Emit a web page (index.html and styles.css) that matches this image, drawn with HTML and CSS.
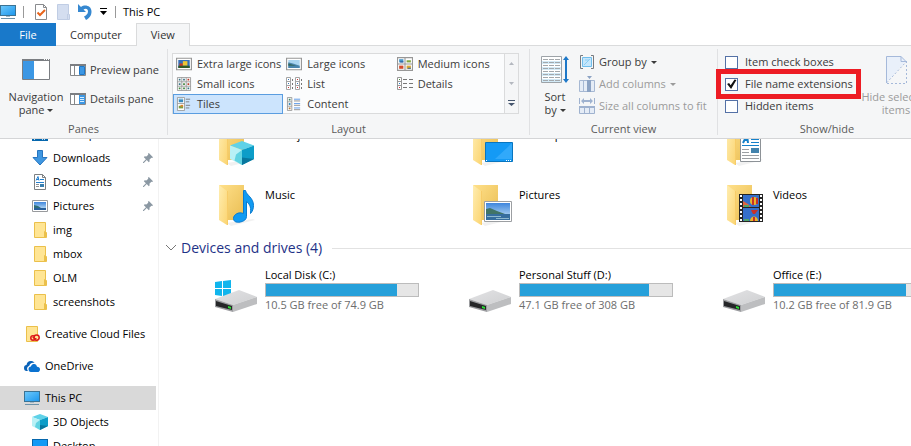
FILE: index.html
```html
<!DOCTYPE html>
<html lang="en">
<head>
<meta charset="utf-8">
<title>This PC</title>
<link rel="stylesheet" href="styles.css">
</head>
<body>
<svg class="sprite" aria-hidden="true">
  <defs>
    <linearGradient id="screen" x1="0" y1="0" x2="1" y2="1"><stop offset="0" stop-color="#6cc8fb"/><stop offset="1" stop-color="#1e98ee"/></linearGradient>
    <linearGradient id="back" x1="0" y1="0" x2="1" y2="1"><stop offset="0" stop-color="#ffe08a"/><stop offset="1" stop-color="#e9bd52"/></linearGradient>
    <linearGradient id="flap" x1="0" y1="0" x2="1" y2="1"><stop offset="0" stop-color="#ffedb0"/><stop offset="1" stop-color="#fbd573"/></linearGradient>
    <linearGradient id="metal" x1="0" y1="0" x2="1" y2="1"><stop offset="0" stop-color="#e2e2e4"/><stop offset="1" stop-color="#cfd0d2"/></linearGradient>
    <linearGradient id="sky" x1="0" y1="0" x2="0" y2="1"><stop offset="0" stop-color="#3f86dd"/><stop offset="1" stop-color="#cfeaf8"/></linearGradient>
  </defs>
  <symbol id="pc" viewBox="0 0 16 16"><path fill="#3b7394" d="M0 1h16v11H0z"/><path fill="url(#screen)" d="M1 2h14v9H1z"/><path fill="#a3b9c6" d="M6 12h4v1H6z"/><path fill="#6c92a9" d="M1 14h14v1H1z"/></symbol>
  <symbol id="desktop" viewBox="0 0 16 16"><path fill="#0667ad" d="M0 1h16v14H0z"/><path fill="#149af5" d="M1 2h14v10H1z"/><path fill="#bfe2fb" d="M2 13h1v1H2zM10 13h1v1h-1zM12 13h1v1h-1z"/></symbol>
  <symbol id="download" viewBox="0 0 16 16"><path fill="#3f97e1" stroke="#2775c0" d="M5.500.5h5v7h4.500L8 15 1 7.500h4.500z"/></symbol>
  <symbol id="document" viewBox="0 0 16 16"><path fill="#fff" stroke="#7c8082" d="M2.500.5h8l3 3v12h-11z"/><path fill="none" stroke="#7c8082" d="M10.500.5v3h3"/><path fill="none" stroke="#2380cf" d="M4 6.500l2-4 1 4M4 5.500h3M8 5.500h4M4 8.500h8"/><path stroke="#8d9194" d="M4 10.500h3M4 12.500h3"/><path fill="#397fae" d="M8 10h4v3H8z"/></symbol>
  <symbol id="picture" viewBox="0 0 16 16"><path fill="#fff" stroke="#989a9d" d="M.5 2.500h15v11H.5z"/><path fill="url(#sky)" d="M2 4h12v8H2z"/><path fill="#2f6f78" d="M2 7l4 1 3 2h-7z"/><path fill="#285f9b" d="M2 10h12v2H2z"/></symbol>
  <symbol id="folder" viewBox="0 0 16 16"><path fill="#ffe594" stroke="#ebc04b" d="M2.500.5h11v9l1 1v5h-12z"/><path fill="#ffdc73" stroke="#ebc04b" d="M12.500 9.500h1v6h-1z"/></symbol>
  <symbol id="ccfolder" viewBox="0 0 16 16"><path fill="#ffe594" stroke="#ebc04b" d="M2.500.5h11v15h-11z"/><circle cx="9" cy="12" r="2.200" fill="#ffe594" stroke="#dc1818" stroke-width="1.500"/><circle cx="12.600" cy="11.600" r="2.600" fill="#ffe594" stroke="#dc1818" stroke-width="1.500"/><path fill="none" stroke="#dc1818" stroke-width="1.300" d="M8.500 11.500c1.500-1 2 2 4 1"/></symbol>
  <symbol id="cloud" viewBox="0 0 16 16"><path fill="#0a62b8" d="M0 10c0-2 1-3 2.500-3C3 4 5 2.500 7.500 3c1.500.2 2.500 1 3 2-3-.6-5 1-5.300 3C3 8.500 2.500 11 4 13H2.500C1 13 0 12 0 10z"/><path fill="#0a72d0" d="M4.500 11c0-1.500 1-2.500 2.500-2.500C7.300 6.500 8.800 5.600 10.200 6c1.500 0 2.500 1.200 2.800 2.800 1.800 0 3 1 3 2.600 0 1.500-1 2.600-2.500 2.600H7c-1.500 0-2.500-1-2.500-3z"/></symbol>
  <symbol id="cube" viewBox="0 0 16 16"><path fill="#5fd2e8" d="M8 0l8 3-8 3-8-3z"/><path fill="#b8f1f6" d="M0 3l8 3v10l-8-4z"/><path fill="#61d3e2" d="M4 9l4-3v10l-5-3z"/><path fill="#0c9dc8" d="M16 3L8 6v10l8-4z"/><path fill="#08779e" d="M8 11l8 1-8 4z"/></symbol>
  <symbol id="pin" viewBox="0 0 12 12"><path fill="#8b98a3" d="M7 0l5 5-1 1-1-.3L7.700 8l.3 2-1 1-2.500-2.500L1 12H0v-1l3.500-3.500L1 5l1-1 2 .3L6.300 2 6 1z"/></symbol>

  <symbol id="bigfolder" viewBox="0 0 48 48"><path fill="#e8e8e8" opacity=".6" d="M14 42l26-4 2 1-24 6z"/><path fill="url(#back)" d="M6 4h25v35H14z"/><path fill="url(#flap)" d="M6 4l8 6v34L6 39z"/><path fill="#f7cc68" d="M14 10h1v34h-1z"/></symbol>
  <symbol id="bigdrive" viewBox="0 0 48 48"><path fill="url(#metal)" d="M2 32l24-9 18 7-24 8z"/><path fill="#bdbec0" d="M20 38l24-8v7l-24 8z"/><path fill="#9c9da0" d="M2 32l18 6v7L2 40z"/><path fill="#252628" d="M3 34l16 5v4L3 39z"/><path fill="#28df32" d="M15 39l3 1v2l-3-1z"/></symbol>

  <symbol id="photo" viewBox="0 0 14 11"><path fill="#fff" stroke="#979797" d="M.5.5h13v10H.5z"/><path fill="#346fb8" d="M2 2h10v7H2z"/><path fill="#cb3a24" d="M3 5h3v3H3z"/><path fill="#efc634" d="M6 3h4v4H6z"/><path fill="#315b28" d="M2 7h10v2H2z"/></symbol>
  <symbol id="landscape" viewBox="0 0 14 11"><path fill="#fff" stroke="#979797" d="M.5.5h13v10H.5z"/><path fill="#a9d4f0" d="M2 2h10v7H2z"/><path fill="#4985ad" d="M2 4l4 1 6 2v2H2z"/><path fill="#34675e" d="M2 5l7 2H2z"/></symbol>
  <symbol id="medium" viewBox="0 0 15 13"><path fill="#fff" stroke="#979797" d="M.5.5h14v12H.5zM7.500.5v12M.5 6.500h14"/><path fill="#4596c8" d="M2 2h4v3H2z"/><path fill="#80a53c" d="M9 3h4v2H9z"/><path fill="#d34b2b" d="M2 8h4v3H2z"/><path fill="#d8ab31" d="M9 8h4v3H9z"/><path fill="#315f9f" d="M3 4h3v1H3zM10 10h3v1h-3z"/></symbol>
  <symbol id="small" viewBox="0 0 16 16"><path fill="#fff" stroke="#979797" d="M.5.5h15v15H.5zM5.500.5v15M10.500.5v15M.5 5.500h15M.5 10.500h15"/><path fill="#3a7586" d="M2 2h2v2H2zM7 2h2v2H7zM2 7h2v2H2zM12 12h2v2h-2z"/><path fill="#bb3c2b" d="M12 2h2v2h-2zM12 7h2v2h-2z"/><path fill="#42863e" d="M7 7h2v2H7zM7 12h2v2H7zM2 12h2v2H2z"/></symbol>
  <symbol id="list" viewBox="0 0 16 14"><path fill="#fff" stroke="#a4a4a4" d="M.5.500h4v12h-4zM9.500.500h4v12h-4zM.5 4.500h4M.5 8.500h4M9.500 4.500h4M9.500 8.500h4"/><path stroke="#777" stroke-dasharray="2 2 2 2" d="M6.500 2v11M15.500 2v11"/><path fill="#3777b7" d="M2 2h1v1H2zM11 6h1v1h-1zM2 6h1v1H2z"/><path fill="#c33" d="M2 10h1v1H2zM11 2h1v1h-1zM11 10h1v1h-1z"/></symbol>
  <symbol id="details" viewBox="0 0 16 14"><path fill="#fff" stroke="#979797" d="M.5.500h4v12h-4zM.5 4.500h4M.5 8.500h4"/><path fill="#42863e" d="M2 2h1v1H2z"/><path fill="#2684d2" d="M2 6h1v1H2z"/><path fill="#d23" d="M2 10h1v1H2z"/><path stroke="#777" d="M6 2.500h4M12 2.500h4M6 6.500h4M12 6.500h4M6 10.500h4M12 10.500h4"/></symbol>
  <symbol id="tiles" viewBox="0 0 16 16"><path fill="#fff" stroke="#979797" d="M.5.500h8v15h-8zM.5 7.500h8"/><path fill="#398abd" d="M2 2h5v4H2z"/><path fill="#9ccbe6" d="M2 2h5v1H2z"/><path fill="#7b9d42" d="M2 10h5v3H2z"/><path fill="#de8530" d="M4 9h3v2H4z"/><path stroke="#777" d="M10 2.500h5M10 5.500h4M10 9.500h5M10 12.500h4"/></symbol>
  <symbol id="content" viewBox="0 0 16 16"><path fill="#fff" stroke="#979797" d="M.5.500h5v15h-5zM.5 5.500h5M.5 10.500h5"/><path fill="#3f8263" d="M2 2h2v2H2z"/><path fill="#237bae" d="M2 7h2v2H2z"/><path fill="#b57b3b" d="M2 12h2v2H2z"/><path stroke="#4f91e7" d="M8 2.500h7M8 7.500h7M8 12.500h7"/><path stroke="#888" d="M8 4.500h7M8 9.500h7M8 14.500h7"/></symbol>
</svg>

<div class="explorer">
  <header class="titlebar">
    <svg class="icon16"><use href="#pc"/></svg>
    <span class="divider"></span>
    <button class="quick" aria-label="Properties"><svg class="icon16" viewBox="0 0 16 16"><path fill="#fff" stroke="#898b8e" d="M2.500.500h8l3 3v12h-11z"/><path fill="none" stroke="#898b8e" d="M10.500.500v3h3"/><path fill="none" stroke="#e8641b" stroke-width="2" d="M4.500 8.500L7 11l5-5"/></svg></button>
    <button class="quick" aria-label="New folder"><svg class="icon16" viewBox="0 0 16 16"><path fill="#d4def0" stroke="#c0cde4" d="M2.500.500h11v10h1v5h-12z"/><path stroke="#c0cde4" d="M12.500 10v6"/></svg></button>
    <button class="quick" aria-label="Undo"><svg class="icon16" viewBox="0 0 16 16"><path fill="#3688d0" d="M1 0v8h8L6.500 5.500C9 4 11 5 11 7.500c0 2.500-2 4-4 5L9 16c4-2 5.500-5 5.500-8.500C14.500 2 8 0 4 3z"/></svg></button>
    <button class="quick customise" aria-label="Customise toolbar"><svg class="arrow" viewBox="0 0 7 7"><path d="M0 0h7v1H0zM0 3h7L3.500 7z"/></svg></button>
    <span class="divider"></span>
    <h1 class="title">This PC</h1>
  </header>

  <nav class="tabs">
    <button class="tab file">File</button>
    <button class="tab">Computer</button>
    <button class="tab active">View</button>
  </nav>

  <section class="ribbon">
    <div class="group panes">
      <div class="group-body">
        <button class="large">
          <svg class="large-icon" viewBox="0 0 28 28"><path fill="#fff" stroke="#7b7e82" d="M.5 3.500h27v20H.5z"/><path fill="#7b7e82" d="M0 3h28v2H0z"/><path fill="#3c97e4" d="M1 5h11v18H1z"/><path fill="#fff" d="M22 3h1v1h-1zM24 3h1v1h-1zM26 3h1v1h-1z"/></svg>
          <span>Navigation</span><span>pane <i class="caret"></i></span>
        </button>
        <div class="stack wide">
          <button class="small"><svg class="icon16" viewBox="0 0 16 16"><path fill="#fff" stroke="#85888b" d="M.5 2.500h15v11H.5zM4.500 4v10"/><path fill="#7b7e82" d="M0 2h16v2H0z"/><path fill="#3c97e4" stroke="#1e78c8" d="M9.500 4.500h5v8h-5z"/></svg>Preview pane</button>
          <button class="small"><svg class="icon16" viewBox="0 0 16 16"><path fill="#fff" stroke="#85888b" d="M.5 2.500h15v11H.5zM4.500 4v10"/><path fill="#7b7e82" d="M0 2h16v2H0z"/><path fill="#3c97e4" d="M9 4h6v9H9z"/><path stroke="#d6edff" d="M10 6.500h4M10 8.500h4M10 10.500h4"/></svg>Details pane</button>
        </div>
      </div>
      <h2 class="group-name">Panes</h2>
    </div>

    <div class="group layout">
      <div class="group-body">
        <div class="gallery">
          <div class="options">
            <button class="option"><svg class="icon16"><use href="#photo"/></svg>Extra large icons</button>
            <button class="option"><svg class="icon16"><use href="#landscape"/></svg>Large icons</button>
            <button class="option"><svg class="icon16"><use href="#medium"/></svg>Medium icons</button>
            <button class="option"><svg class="icon16"><use href="#small"/></svg>Small icons</button>
            <button class="option"><svg class="icon16"><use href="#list"/></svg>List</button>
            <button class="option"><svg class="icon16"><use href="#details"/></svg>Details</button>
            <button class="option selected"><svg class="icon16"><use href="#tiles"/></svg>Tiles</button>
            <button class="option"><svg class="icon16"><use href="#content"/></svg>Content</button>
          </div>
          <div class="scroller">
            <button class="step" aria-label="Scroll up"><svg class="arrow" viewBox="0 0 7 7"><path fill="#b4b8bf" d="M1 5h5L3.500 2z"/></svg></button>
            <button class="step" aria-label="Scroll down"><svg class="arrow" viewBox="0 0 7 7"><path fill="#b4b8bf" d="M1 2h5L3.500 5z"/></svg></button>
            <button class="step" aria-label="More layouts"><svg class="arrow" viewBox="0 0 7 7"><path fill="#46566e" d="M0 0h7v1H0zM0 3h7L3.500 6z"/></svg></button>
          </div>
        </div>
      </div>
      <h2 class="group-name">Layout</h2>
    </div>

    <div class="group view">
      <div class="group-body">
        <button class="large">
          <svg class="large-icon" viewBox="0 0 28 28"><path fill="#fff" stroke="#9da3a8" d="M.5.500h20v26H.5z"/><path fill="#d2eaf7" d="M1 5h19v3H1zM1 11h19v3H1zM1 17h19v3H1zM1 23h19v3H1z"/><path stroke="#a3a8ac" stroke-dasharray="5 1" d="M2 3.500h17M2 6.500h17M2 9.500h17M2 12.500h17M2 15.500h17M2 18.500h17M2 21.500h17M2 24.500h17"/><path fill="#1e78c8" d="M25 0l3 4h-2v19h2l-3 4-3-4h2V4h-2z"/></svg>
          <span>Sort</span><span>by <i class="caret"></i></span>
        </button>
        <div class="stack">
          <button class="small"><svg class="icon16" viewBox="0 0 16 16"><path fill="none" stroke="#777b80" d="M4 1.500H1.500v13H4M12 1.500h2.500v13H12"/><path fill="#c5e6fb" stroke="#6fbdec" d="M3.500 3.500h9v9h-9z"/><path stroke="#8bcdf4" d="M5 11l6-6M6 6h4"/></svg>Group by <i class="caret"></i></button>
          <button class="small" disabled><svg class="icon16" viewBox="0 0 16 16"><path fill="#e5ecf6" stroke="#a6b8d3" d="M.5 4.500h15v11H.5zM4.500 4.500v11"/><path fill="#8ca3c4" d="M8 4h4v12H8zM8 0h5l-2.500 3z"/></svg>Add columns <i class="caret"></i></button>
          <button class="small" disabled><svg class="icon16" viewBox="0 0 16 16"><path fill="#e5ecf6" stroke="#9fb2cf" d="M.5 8.500h15v7H.5zM5.500 8.500v7M10.500 8.500v7M.5 0v6M15.500 0v6"/><path fill="#9fb2cf" d="M2 3l3-3v2h6V0l3 3-3 3V4H5v2zM0 8h16v2H0z"/></svg>Size all columns to fit</button>
        </div>
      </div>
      <h2 class="group-name">Current view</h2>
    </div>

    <div class="group show">
      <div class="group-body">
        <div class="stack">
          <label class="check"><input type="checkbox">Item check boxes</label>
          <label class="check marked"><input type="checkbox" checked>File name extensions</label>
          <label class="check"><input type="checkbox">Hidden items</label>
        </div>
        <button class="large" disabled>
          <svg class="large-icon" viewBox="0 0 28 28"><path fill="#e9f0fa" d="M4 0h15l5 5L4 27z"/><path fill="none" stroke="#a5b9da" d="M4.500 27V.500h14.500v5h5M19 .5l5 5"/><path fill="none" stroke="#a5b9da" stroke-dasharray="2 2" d="M24.500 5v22.500H4L24 6"/></svg>
          <span>Hide selected</span><span>items</span>
        </button>
      </div>
      <h2 class="group-name">Show/hide</h2>
    </div>
  </section>

  <div class="body">
    <nav class="sidebar">
      <ul class="tree">
        <li><a class="node child" href="#"><svg class="icon16"><use href="#desktop"/></svg>Desktop<svg class="pin"><use href="#pin"/></svg></a></li>
        <li><a class="node child" href="#"><svg class="icon16"><use href="#download"/></svg>Downloads<svg class="pin"><use href="#pin"/></svg></a></li>
        <li><a class="node child" href="#"><svg class="icon16"><use href="#document"/></svg>Documents<svg class="pin"><use href="#pin"/></svg></a></li>
        <li><a class="node child" href="#"><svg class="icon16"><use href="#picture"/></svg>Pictures<svg class="pin"><use href="#pin"/></svg></a></li>
        <li><a class="node child" href="#"><svg class="icon16"><use href="#folder"/></svg>img</a></li>
        <li><a class="node child" href="#"><svg class="icon16"><use href="#folder"/></svg>mbox</a></li>
        <li><a class="node child" href="#"><svg class="icon16"><use href="#folder"/></svg>OLM</a></li>
        <li><a class="node child" href="#"><svg class="icon16"><use href="#folder"/></svg>screenshots</a></li>
      </ul>
      <ul class="tree"><li><a class="node" href="#"><svg class="icon16"><use href="#ccfolder"/></svg>Creative Cloud Files</a></li></ul>
      <ul class="tree"><li><a class="node" href="#"><svg class="icon16"><use href="#cloud"/></svg>OneDrive</a></li></ul>
      <ul class="tree">
        <li><a class="node current" href="#"><svg class="icon16"><use href="#pc"/></svg>This PC</a></li>
        <li><a class="node child" href="#"><svg class="icon16"><use href="#cube"/></svg>3D Objects</a></li>
        <li><a class="node child" href="#"><svg class="icon16"><use href="#desktop"/></svg>Desktop</a></li>
      </ul>
    </nav>

    <main class="files">
      <div class="grid folders">
        <a class="tile" href="#"><svg class="icon48" viewBox="0 0 48 48"><use href="#bigfolder"/><svg x="17" y="20" width="24" height="24"><use href="#cube"/></svg></svg><span>3D Objects</span></a>
        <a class="tile" href="#"><svg class="icon48" viewBox="0 0 48 48"><use href="#bigfolder"/><path fill="#149af5" stroke="#0875bf" d="M18.500 21.500h27v19h-27z"/><path fill="#4eb8ff" opacity=".5" d="M45 22v16H28z"/><path stroke="#fff" stroke-dasharray="1 1" d="M19 39.500h2M39 39.500h6"/></svg><span>Desktop</span></a>
        <a class="tile" href="#"><svg class="icon48" viewBox="0 0 48 48"><use href="#bigfolder"/><path fill="#fff" stroke="#8d9297" d="M19.500 12.500h20v28h-20z"/><path stroke="#1681ca" d="M21 24.500h17M30 21.500h8M30 18.500h8"/><path fill="none" stroke="#1681ca" stroke-width="2" d="M22 22l4-8 1 8M23 19h4"/><path stroke="#9b9fa3" d="M21 28.500h7M21 31.500h7M21 34.500h17M21 37.500h17"/><path fill="#4383ad" d="M30 27h8v5h-8z"/></svg><span>Documents</span></a>
        <a class="tile" href="#"><svg class="icon48" viewBox="0 0 48 48"><use href="#bigfolder"/><path fill="#119bf2" stroke="#087bd0" d="M30.500 9.500h2c1 5 8 7 8 15 0 3-1 6-3 8 1-8-2-10-4-12v15c0 3-3 5-6 5.500-5 1-7-1-7-3.500 0-4 5-7 10-5z"/></svg><span>Music</span></a>
        <a class="tile" href="#"><svg class="icon48" viewBox="0 0 48 48"><use href="#bigfolder"/><path fill="#fff" stroke="#9c9fa2" d="M17.500 20.500h27v20h-27z"/><path fill="url(#sky)" d="M19 22h24v17H19z"/><path fill="#417467" d="M19 28l4-1 7 3 8 3H19z"/><path fill="#366e9e" d="M19 33h24v6H19z"/><path stroke="#8db8ce" d="M20 35.500h14M29 37.500h13"/></svg><span>Pictures</span></a>
        <a class="tile" href="#"><svg class="icon48" viewBox="0 0 48 48"><use href="#bigfolder"/><path fill="#252525" d="M18 13h24v28H18z"/><path stroke="#fff" stroke-width="2" stroke-dasharray="2 2" d="M20 14v27M40 14v27"/><path fill="#356fca" d="M22 14h16v12H22zM22 27h16v13H22z"/><circle cx="33" cy="20" r="4" fill="#e9b52b"/><path fill="#c83228" d="M31 16h2v8h-2zM35 17h2v6h-2zM30 29h7l-3 4h-2z"/><path fill="#df6540" d="M22 20l5 3 3 3h-8z"/><path fill="#51a36a" d="M23 24h5v2h-5zM23 38h5v2h-5z"/><path fill="#e9b52b" d="M29 40c0-6 8-6 8 0z"/><path fill="#c83228" d="M32 36h2v4h-2z"/></svg><span>Videos</span></a>
      </div>

      <h2 class="section"><svg class="chevron" viewBox="0 0 12 8"><path fill="none" stroke="#777" d="M1 1l5 5 5-5"/></svg>Devices and drives (4)</h2>

      <div class="grid">
        <a class="tile" href="#"><svg class="icon48" viewBox="0 0 48 48"><path fill="#10b5ed" d="M2 15l7-1v7H2zM10 14l8-1v8h-8zM2 22h7v7l-7-1zM10 22h8v8l-8-1z"/><use href="#bigdrive"/></svg><span class="drive">Local Disk (C:)<span class="bar"><span class="used" style="width:86%"></span></span><span class="free">10.5 GB free of 74.9 GB</span></span></a>
        <a class="tile" href="#"><svg class="icon48"><use href="#bigdrive"/></svg><span class="drive">Personal Stuff (D:)<span class="bar"><span class="used" style="width:85%"></span></span><span class="free">47.1 GB free of 308 GB</span></span></a>
        <a class="tile" href="#"><svg class="icon48"><use href="#bigdrive"/></svg><span class="drive">Office (E:)<span class="bar"><span class="used" style="width:87%"></span></span><span class="free">10.2 GB free of 81.9 GB</span></span></a>
      </div>
    </main>
  </div>
</div>
</body>
</html>
```
FILE: styles.css
```css
* { box-sizing: border-box; }
body { margin: 0; background: #fff; color: #000; font: 11px/16px "Open Sans", "Noto Sans", sans-serif; overflow: hidden; }
button { margin: 0; padding: 0; border: 0; background: none; color: inherit; font: inherit; }
h1, h2, ul { margin: 0; padding: 0; font: inherit; list-style: none; }
a { color: inherit; text-decoration: none; }
svg { flex: none; display: block; }
.sprite { position: absolute; width: 0; height: 0; }
.icon16 { width: 16px; height: 16px; }
.icon48 { width: 48px; height: 48px; }
.arrow { width: 7px; height: 7px; }

.explorer { display: flex; flex-direction: column; height: 100vh; overflow: hidden; }

.titlebar { display: flex; align-items: center; flex: none; height: 23px; }
.divider { width: 1px; height: 12px; margin: 0 7px; background: #999; }
.quick { width: 22px; padding-left: 2px; }
.quick.customise { width: 11px; padding-left: 3px; }
.title { white-space: nowrap; }

.tabs { display: flex; flex: none; height: 23px; border-bottom: 1px solid #dadbdc; color: #333; }
.tab { height: 23px; padding: 0 14px; }
.tab.file { width: 56px; background: #1979ca; color: #fff; }
.tab.active { border: 1px solid #dadbdc; border-bottom: 0; background: #f5f6f7; }

.ribbon { display: flex; flex: none; position: relative; z-index: 1; height: 93px; padding: 3px 0; overflow: hidden; background: #f5f6f7; border-bottom: 1px solid #d4d5d7; color: #3b3b3b; white-space: nowrap; }
.group { display: flex; flex-direction: column; flex: none; border-right: 1px solid #e0e1e3; }
.group-body { display: flex; flex: none; height: 72px; }
.group-name { line-height: 16px; text-align: center; color: #5a5a5a; }
.panes { width: 168px; }
.layout { width: 362px; }
.view { width: 188px; }
.show { width: 218px; border: 0; }

.large { display: flex; flex-direction: column; align-items: center; justify-content: flex-start; padding-top: 7px; line-height: 13px; }
.large-icon { width: 28px; height: 28px; margin-bottom: 6px; }
.caret { display: inline-block; width: 0; height: 0; border: 3px solid transparent; border-top-color: currentColor; border-bottom: 0; vertical-align: 2px; }
.stack { display: flex; flex-direction: column; padding-top: 2px; }
.stack.wide { padding-top: 6px; }
.small { display: flex; align-items: center; gap: 4px; height: 22px; }
.wide .small { height: 29px; }
button:disabled { color: #9b9b9b; }
.panes .large { width: 62px; margin: 0 3px 0 5px; }
.view .large { width: 40px; margin: 0 4px 0 5px; }
.show .large { width: 70px; }

.layout .group-body { padding: 4px 10px 7px 4px; }
.gallery { display: flex; flex: 1; border: 1px solid #dadbdc; background: #fbfcfd; }
.options { display: grid; flex: 1; grid-template-columns: repeat(3, 1fr); grid-auto-rows: 20px; }
.option { display: flex; align-items: center; gap: 5px; padding-left: 2px; border: 1px solid transparent; }
.option .icon16 { height: 14px; }
.option.selected { border-color: #5a9de0; background: #cce4fd; }
.scroller { display: flex; flex-direction: column; width: 14px; border-left: 1px solid #dadbdc; background: #f5f6f7; }
.step { display: flex; flex: 1; align-items: center; justify-content: center; }

.check { display: flex; align-items: center; gap: 7px; position: relative; width: 136px; height: 22px; margin-left: 7px; }
.check input { appearance: none; width: 13px; height: 13px; margin: 0; border: 1px solid #5471a6; background: #fff; }
.check input:checked::after { content: ""; display: block; height: 11px; background: #111; clip-path: polygon(10% 50%, 28% 40%, 42% 62%, 78% 8%, 95% 14%, 46% 96%); }
.marked::after { content: ""; position: absolute; inset: -4px 0 -4px -9px; border: 5px solid #ed1c24; }

.body { display: flex; flex: 1; min-height: 0; overflow: hidden; }
.sidebar { flex: none; width: 159px; margin-top: -17px; border-right: 1px solid #f2f2f2; }
.tree { margin-bottom: 8px; }
.node { display: flex; align-items: center; gap: 5px; height: 24px; padding-left: 24px; margin-right: 2px; white-space: nowrap; }
.node.child { padding-left: 32px; }
.node.current { background: #d9d9d9; }
.pin { width: 10px; height: 10px; margin: 0 3px 0 auto; }

.files { flex: 1; min-width: 0; margin-top: -18px; overflow: hidden; }
.grid { display: grid; grid-template-columns: repeat(3, 206px); column-gap: 48px; grid-auto-rows: 60px; padding-left: 54px; }
.tile { display: flex; gap: 4px; white-space: nowrap; }
.folders span { padding-top: 6px; }
.section { display: flex; align-items: center; gap: 4px; height: 14px; margin-bottom: 12px; padding-left: 6px; font-size: 14px; color: #1e3287; }
.section::after { content: ""; flex: 1; height: 1px; margin-left: 6px; background: #e2e2e2; }
.chevron { width: 12px; height: 8px; }
.drive { display: block; width: 154px; }
.bar { display: block; height: 14px; border: 1px solid #bcbcbc; background: #e6e6e6; }
.used { display: block; height: 12px; background: #26a0da; }
.free { display: block; color: #6d6d6d; }
```
